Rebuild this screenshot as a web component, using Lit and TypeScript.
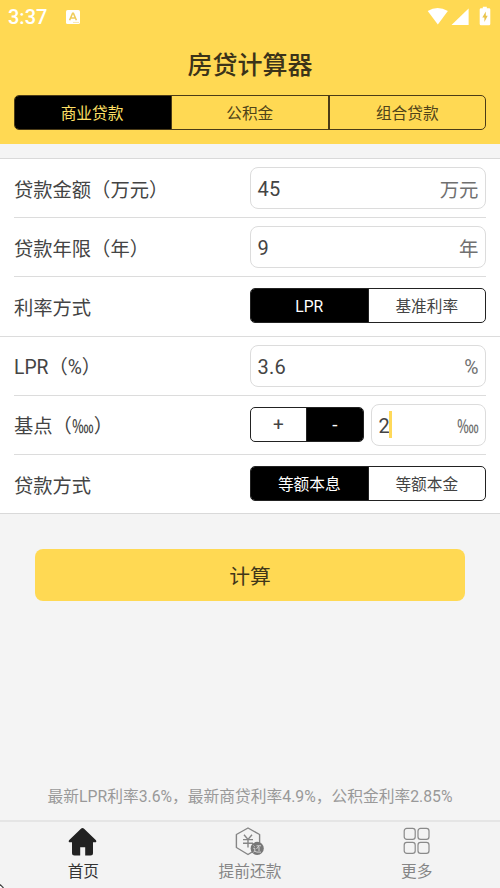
import { LitElement, html, css, svg } from "lit";
import { customElement, property } from "lit/decorators.js";
import { classMap } from "lit/directives/class-map.js";

const FONT = css`Roboto, "Noto Sans CJK SC", sans-serif`;

@customElement("segment-bar")
class SegmentBar extends LitElement {
  @property({ attribute: false }) items: string[] = [];
  @property({ type: Number }) active = 0;

  static styles = css`
    :host { display: flex; box-sizing: border-box; height: 35px; border: 1px solid #222; border-radius: 5px; overflow: hidden; background: #fff; color: #444; font-size: 15.7px; margin-bottom: 1px; }
    :host([tone="header"]) { background: transparent; border-color: #4b3b16; color: #4f4319; }
    .item { flex: 1 1 0; display: flex; align-items: center; justify-content: center; line-height: 20px; white-space: nowrap; padding-top: 2px; box-sizing: border-box; }
    :host([tone="header"]) .item:first-child { flex: 0 0 156px; padding-right: 2px; }
    .item + .item { border-left: 1px solid #222; }
    :host([tone="header"]) .item + .item { border-left: 2px solid #4b3b16; }
    .item.on { background: #000; color: #fff; }
    :host([tone="header"]) .item.on { color: #ffe067; }
    :host([tone="header"]) .item.on + .item { border-left-width: 1px; }
    :host([tone="sign"]) { font-size: 19px; }
    :host([tone="sign"]) .item:first-child { flex: 0 0 55px; }
  `;

  render() {
    return this.items.map(
      (t, i) => html`<div class=${classMap({ item: true, on: i === this.active })}>${t}</div>`
    );
  }
}

@customElement("unit-field")
class UnitField extends LitElement {
  @property() value = "";
  @property() unit = "";
  @property({ type: Boolean }) focused = false;

  static styles = css`
    :host { display: flex; box-sizing: border-box; height: 42px; border: 1px solid #dcdcdc; border-radius: 8px; padding: 2px 6.5px 0 6.5px; align-items: center; justify-content: space-between; background: #fff; font-size: 19.4px; line-height: 28px; color: #444; }
    .value { display: flex; align-items: center; font-size: 20px; letter-spacing: 0.3px; }
    .caret { width: 3px; height: 27px; background: #ffd95a; margin: -2px 0 0 -1.5px; }
    .unit { color: #707070; padding-top: 3px; }
    .unit.sign { width: 22px; transform: scaleX(0.73); transform-origin: 0 50%; font-weight: 300; }
  `;

  render() {
    return html`
      <span class="value">${this.value}${this.focused ? html`<i class="caret"></i>` : null}</span>
      <span class=${classMap({ unit: true, sign: this.unit === "‱" })}>${this.unit}</span>
    `;
  }
}

const homeIcon = svg`
  <path d="M13.2 1.4Q14.5.4 15.8 1.4L28 13.2Q29 15.2 27 15.3H25V26Q25 28.5 22.5 28.5H17.2V20.2H12.2V28.5H6.5Q4 28.5 4 26V15.3H2Q0 15.2 1 13.2Z" fill="#222"/>`;

const repayIcon = svg`
  <path d="M13 1 24.6 7.5V20.5L13 27.5 1.4 20.5V7.5Z" fill="none" stroke="#858585" stroke-width="1.4" stroke-linejoin="round"/>
  <path d="M9 7.8 13 12.4 17 7.8M8 12.6H18M8 16.2H18M13 12.4V20.5" fill="none" stroke="#858585" stroke-width="1.4"/>
  <circle cx="22.2" cy="21.4" r="6.6" fill="#777"/>
  <path d="M21.5 18.8H26M24 18.8 21.5 22M24 20V24M18.5 18.6 19.6 19.6M18.3 21.3H19.8V24.2L18.4 25.2M19.8 24.4Q21 25.4 26 25.1" fill="none" stroke="#ddd" stroke-width=".9"/>`;

const moreIcon = svg`
  <g fill="none" stroke="#8a8a8a" stroke-width="1.2">
    <rect x="2.2" y="1.3" width="11" height="11" rx="2.6"/>
    <rect x="16" y="1.3" width="11" height="11" rx="2.6"/>
    <rect x="2.2" y="15.3" width="11" height="11" rx="2.6"/>
    <rect x="16" y="15.3" width="11" height="11" rx="2.6"/>
  </g>`;

@customElement("app-root")
class AppRoot extends LitElement {
  static styles = css`
    :host { display: flex; flex-direction: column; position: relative; width: 500px; height: 888px; box-sizing: border-box; overflow: hidden; background: #f4f4f4; font-family: ${FONT}; color: #333; }
    .header { height: 144px; box-sizing: border-box; background: #ffd953; padding: 0 14px; flex: none; }
    .status { height: 34px; display: flex; align-items: center; justify-content: space-between; color: #fff; margin: 0 -14px; padding: 0 8px; }
    .left, .right { display: flex; align-items: center; }
    .time { font-size: 20px; line-height: 34px; width: 58px; font-weight: 500; }
    .right svg { display: block; }
    .title { height: 61px; box-sizing: border-box; padding-top: 13px; font-size: 25px; line-height: 38px; font-weight: 500; text-align: center; color: #3b3319; }
    .form { flex: none; margin-top: 14px; background: #fff; border-top: 1px solid #d9d9d9; border-bottom: 1px solid #d9d9d9; }
    .row { display: grid; grid-template-columns: 236px 236px; align-items: center; height: 59.2px; box-sizing: border-box; margin: 0 14px; border-bottom: 1px solid #dcdcdc; }
    .row.wide { margin: 0; padding: 0 14px; }
    .row.last { border-bottom: 0; height: 58px; }
    .label { font-size: 19.3px; line-height: 28px; color: #444; white-space: nowrap; padding-top: 5px; }
    .row.last .label { padding-top: 7px; }
    .row.last segment-bar { margin-bottom: 0; }
    .sign { display: inline-block; width: 22px; transform: scaleX(0.73); transform-origin: 0 50%; font-weight: 300; }
    .pair { display: grid; grid-template-columns: 114px 115px; gap: 7px; align-items: center; }
    .calc { flex: none; margin: 35px 35px 0; height: 52px; border-radius: 8px; background: #ffd953; display: flex; align-items: center; justify-content: center; font-size: 20.8px; color: #40371a; }
    .note { margin-top: auto; height: 48px; line-height: 50px; text-align: center; font-size: 15.75px; color: #999; white-space: nowrap; }
    .tabs { flex: none; height: 68px; box-sizing: border-box; border-top: 2px solid #e5e5e5; background: #f3f3f3; display: grid; grid-template-columns: repeat(3, 1fr); }
    .tab { display: flex; flex-direction: column; align-items: center; padding-top: 5px; font-size: 15.7px; line-height: 24px; color: #858585; }
    .tab.on { color: #333; }
    .tab svg { display: block; height: 31px; width: 30px; margin-bottom: 2px; }
    .corner { position: absolute; left: 0; bottom: 0; }
  `;

  render() {
    return html`
      <div class="header">
        <div class="status">
          <div class="left">
            <span class="time">3:37</span>
            <svg width="14" height="14" viewBox="0 0 14 14">
              <rect width="14" height="14" rx="1.6" fill="#fff"/>
              <path d="M3.6 10.3 6.6 3.3H7.4L10.4 10.3M4.8 8H9.2" fill="none" stroke="#efcc5c" stroke-width="1.6"/>
              <path d="M7.5 12.4H12.5" stroke="#efcc5c" stroke-width="1" stroke-dasharray="1 1"/>
            </svg>
          </div>
          <div class="right">
            <svg width="65" height="22" viewBox="0 -2 65 22" fill="#fff">
              <path d="M.7 2.9Q10.5-3 20.9 2.9L10.8 16.4Z"/>
              <path d="M24.5 17 41.6 .5V17Z"/>
              <path d="M55.8-1.2H59.8V.3H62Q63.3.3 63.3 1.6V15.9Q63.3 17.2 62 17.2H54Q52.7 17.2 52.7 15.9V1.6Q52.7.3 54 .3H55.8Z"/>
              <path d="M58.8 3.4 55.3 9.4H57.4V14L60.7 7.8H58.8Z" fill="#e9c34a"/>
            </svg>
          </div>
        </div>
        <div class="title">房贷计算器</div>
        <segment-bar tone="header" .items=${["商业贷款", "公积金", "组合贷款"]}></segment-bar>
      </div>

      <div class="form">
        <div class="row"><span class="label">贷款金额（万元）</span><unit-field value="45" unit="万元"></unit-field></div>
        <div class="row"><span class="label">贷款年限（年）</span><unit-field value="9" unit="年"></unit-field></div>
        <div class="row wide"><span class="label">利率方式</span><segment-bar .items=${["LPR", "基准利率"]}></segment-bar></div>
        <div class="row"><span class="label">LPR（%）</span><unit-field value="3.6" unit="%"></unit-field></div>
        <div class="row">
          <span class="label">基点（<span class="sign">‱</span>）</span>
          <div class="pair">
            <segment-bar tone="sign" .items=${["+", "-"]} active="1"></segment-bar>
            <unit-field value="2" unit="‱" focused></unit-field>
          </div>
        </div>
        <div class="row last"><span class="label">贷款方式</span><segment-bar .items=${["等额本息", "等额本金"]}></segment-bar></div>
      </div>

      <div class="calc">计算</div>
      <div class="note">最新LPR利率3.6%，最新商贷利率4.9%，公积金利率2.85%</div>

      <div class="tabs">
        <div class="tab on"><svg viewBox="0 0 30 31">${homeIcon}</svg>首页</div>
        <div class="tab"><svg viewBox="0 0 30 31">${repayIcon}</svg>提前还款</div>
        <div class="tab"><svg viewBox="0 0 30 31">${moreIcon}</svg>更多</div>
      </div>
      <svg class="corner" width="4" height="4" viewBox="0 0 4 4"><path d="M0 0 4 4H0Z" fill="#fff"/><path d="M0 .5 3.5 4" stroke="#444" stroke-width="1.2"/></svg>
    `;
  }
}
